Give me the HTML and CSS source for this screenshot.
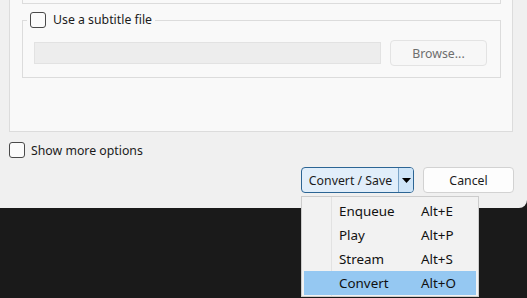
FILE: index.html
```html
<!DOCTYPE html>
<html>
<head>
<meta charset="utf-8">
<link rel="stylesheet" href="styles.css">
</head>
<body>
<div class="screen">
  <div class="window">
    <div class="panel">
      <div class="group-stub"></div>
      <fieldset class="group">
        <legend class="legend"><span class="check"></span><span>Use a subtitle file</span></legend>
        <div class="file-row">
          <div class="input"></div>
          <div class="btn-browse">Browse...</div>
        </div>
      </fieldset>
    </div>
    <div class="more-row"><span class="check"></span><span>Show more options</span></div>
    <div class="actions">
      <div class="split-btn">
        <span class="split-main">Convert / Save</span>
        <span class="split-arrow"><svg width="9" height="5" viewBox="0 0 9 5"><path d="M0 0H9L4.5 5Z" fill="#000"/></svg></span>
      </div>
      <div class="btn">Cancel</div>
    </div>
  </div>
  <div class="menu">
    <div class="menu-item"><span class="mi-label">Enqueue</span><span class="mi-key">Alt+E</span></div>
    <div class="menu-item"><span class="mi-label">Play</span><span class="mi-key">Alt+P</span></div>
    <div class="menu-item"><span class="mi-label">Stream</span><span class="mi-key">Alt+S</span></div>
    <div class="menu-item active"><span class="mi-label">Convert</span><span class="mi-key">Alt+O</span></div>
  </div>
</div>
</body>
</html>
```

FILE: styles.css
```css
* { box-sizing: border-box; }
html, body { margin: 0; padding: 0; }
body {
  width: 527px;
  height: 298px;
  overflow: hidden;
  background: #1a1a1a;
  font-family: "Noto Sans", "Open Sans", sans-serif;
  font-size: 12.3px;
  color: #1b1b1b;
}
.screen { position: relative; width: 527px; height: 298px; }
.window {
  width: 527px;
  height: 208px;
  background: #f0f0f0;
  border-bottom-right-radius: 8px;
  display: flex;
  flex-direction: column;
}
.panel {
  margin-left: 9px;
  width: 504px;
  height: 132px;
  background: #f9f9f9;
  border: 1px solid #dcdcdc;
  border-top: none;
  padding-left: 12px;
}
.group-stub {
  width: 479px;
  height: 4px;
  border: 1px solid #dcdcdc;
  border-top: none;
}
.group {
  width: 479px;
  margin: 8px 0 0 0;
  padding: 12px 12px 11px 11px;
  border: 1px solid #dcdcdc;
  min-width: 0;
}
.legend {
  display: flex;
  align-items: center;
  gap: 7px;
  padding: 0 3px 0 3px;
  margin-left: -7px;
  line-height: 16px;
}
.check {
  display: inline-block;
  width: 16px;
  height: 16px;
  border: 1px solid #4a4a4a;
  border-radius: 3px;
  background: #fbfbfb;
  flex: none;
}
.file-row { display: flex; align-items: center; gap: 9px; }
.input {
  width: 347px;
  height: 22px;
  background: #ededed;
  border: 1px solid #e2e2e2;
}
.btn-browse {
  width: 97px;
  height: 26px;
  border: 1px solid #e3e3e3;
  border-radius: 4px;
  background: #f7f7f7;
  color: #6e6e6e;
  display: flex;
  align-items: center;
  justify-content: center;
}
.more-row {
  display: flex;
  align-items: center;
  gap: 6px;
  margin: 10px 0 0 9px;
  height: 16px;
}
.actions {
  display: flex;
  justify-content: flex-end;
  gap: 9px;
  padding-right: 13px;
  margin-top: 9px;
}
.split-btn {
  width: 113px;
  height: 26px;
  border: 1px solid #2c6594;
  border-radius: 4px;
  background: #e1eefa;
  display: flex;
  overflow: hidden;
}
.split-main {
  flex: 1;
  display: flex;
  align-items: center;
  justify-content: center;
  padding-left: 1px;
}
.split-arrow {
  width: 15px;
  border-left: 1px solid #7aa3c6;
  background: #cfe5f8;
  display: flex;
  align-items: center;
  justify-content: center;
}
.btn {
  width: 91px;
  height: 26px;
  border: 1px solid #d2d2d2;
  border-radius: 4px;
  background: #fdfdfd;
  display: flex;
  align-items: center;
  justify-content: center;
}
.menu {
  position: absolute;
  left: 301px;
  top: 196px;
  width: 178px;
  height: 101px;
  background: #f2f2f2;
  border: 1px solid #cccccc;
  padding: 2px;
  font-size: 13.4px;
  color: #111;
  background-image: linear-gradient(to right, transparent 29px, #e2e2e2 29px, #e2e2e2 30px, transparent 30px);
}
.menu-item {
  height: 24px;
  display: flex;
  align-items: center;
  padding-left: 35px;
}
.mi-label { width: 82px; }
.menu-item.active { background: #95c8f2; }
```
